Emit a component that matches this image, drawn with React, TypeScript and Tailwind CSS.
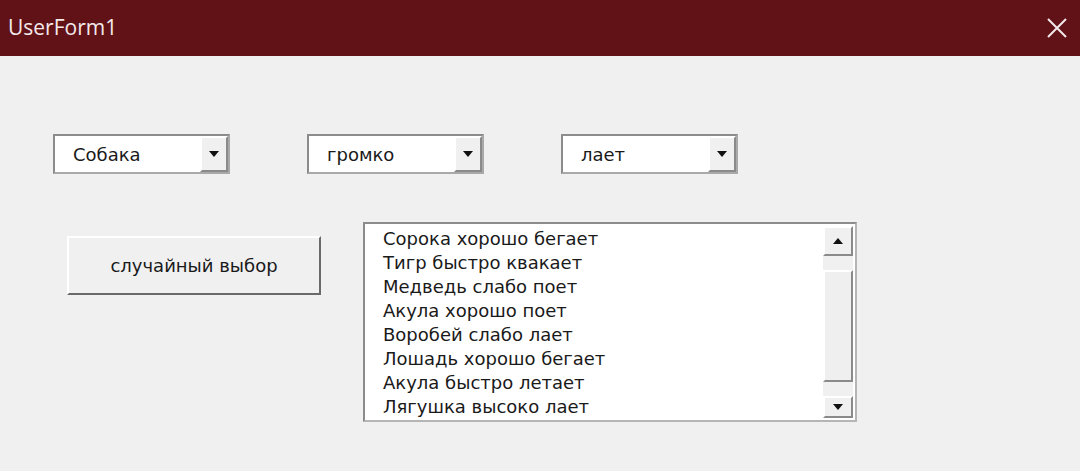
import React from 'react';

const items = [
  'Сорока хорошо бегает',
  'Тигр быстро квакает',
  'Медведь слабо поет',
  'Акула хорошо поет',
  'Воробей слабо лает',
  'Лошадь хорошо бегает',
  'Акула быстро летает',
  'Лягушка высоко лает',
];

const Arrow = ({ up }: { up?: boolean }) => (
  <svg width="12" height="8" viewBox="0 0 12 8">
    <path d={up ? 'M1 7 L6 1 L11 7 Z' : 'M1 1 L11 1 L6 7 Z'} fill="#111" />
  </svg>
);

const Combo = ({ value }: { value: string }) => (
  <div className="flex h-[40px] w-[177px] border-2 border-t-[#8c8c8c] border-l-[#8c8c8c] border-b-[#a9a9a9] border-r-[#a9a9a9] bg-white">
    <div className="flex flex-1 items-center pl-[18px] text-[18px] text-[#1a1a1a]">{value}</div>
    <div className="flex w-[28px] items-center justify-center border-2 border-t-white border-l-white border-b-[#8a8a8a] border-r-[#8a8a8a] bg-[#f0f0f0]">
      <Arrow />
    </div>
  </div>
);

export default function App() {
  return (
    <div className="h-[471px] w-[1080px] bg-[#f0f0f0]" style={{ fontFamily: 'Tahoma, "DejaVu Sans", "Noto Sans", sans-serif' }}>
      {/* Title bar */}
      <div className="flex h-[56px] items-center justify-between bg-[#611217] pl-[8px] pr-[12px]">
        <span className="text-[21px] text-[#f3e9ea]" style={{ fontFamily: '"Open Sans", "Noto Sans", sans-serif' }}>UserForm1</span>
        <svg width="22" height="22" viewBox="0 0 22 22">
          <path d="M2 2 L20 20 M20 2 L2 20" stroke="#f3e9ea" strokeWidth="2" />
        </svg>
      </div>

      {/* Combos */}
      <div className="mt-[78px] flex gap-[77px] pl-[53px]">
        <Combo value="Собака" />
        <Combo value="громко" />
        <Combo value="лает" />
      </div>

      {/* Button + list */}
      <div className="mt-[48px] flex items-start pl-[67px]">
        <button className="mt-[14px] flex h-[59px] w-[254px] items-center justify-center border-2 border-t-white border-l-white border-b-[#6a6a6a] border-r-[#6a6a6a] bg-[#f0f0f0] text-[18px] text-[#1a1a1a]">
          случайный выбор
        </button>

        <div className="ml-[42px] flex h-[200px] w-[494px] border-2 border-t-[#8c8c8c] border-l-[#8c8c8c] border-b-[#b5b5b5] border-r-[#b5b5b5] bg-white">
          <div className="flex-1 pl-[18px] pt-[3px] text-[18px] leading-[24px] text-[#1a1a1a]">
            {items.map((t) => (
              <div key={t}>{t}</div>
            ))}
          </div>
          <div className="flex w-[32px] flex-col py-[2px] pr-[2px]">
            <div className="flex h-[30px] items-center justify-center border-2 border-t-white border-l-white border-b-[#8a8a8a] border-r-[#8a8a8a] bg-[#f0f0f0]">
              <Arrow up />
            </div>
            <div className="flex-1 bg-[#f0f0f0] py-[14px]">
              <div className="h-full border-2 border-t-white border-l-white border-b-[#8a8a8a] border-r-[#8a8a8a] bg-[#efefef]" />
            </div>
            <div className="flex h-[22px] items-center justify-center border-2 border-t-white border-l-white border-b-[#8a8a8a] border-r-[#8a8a8a] bg-[#f0f0f0]">
              <Arrow />
            </div>
          </div>
        </div>
      </div>
    </div>
  );
}
